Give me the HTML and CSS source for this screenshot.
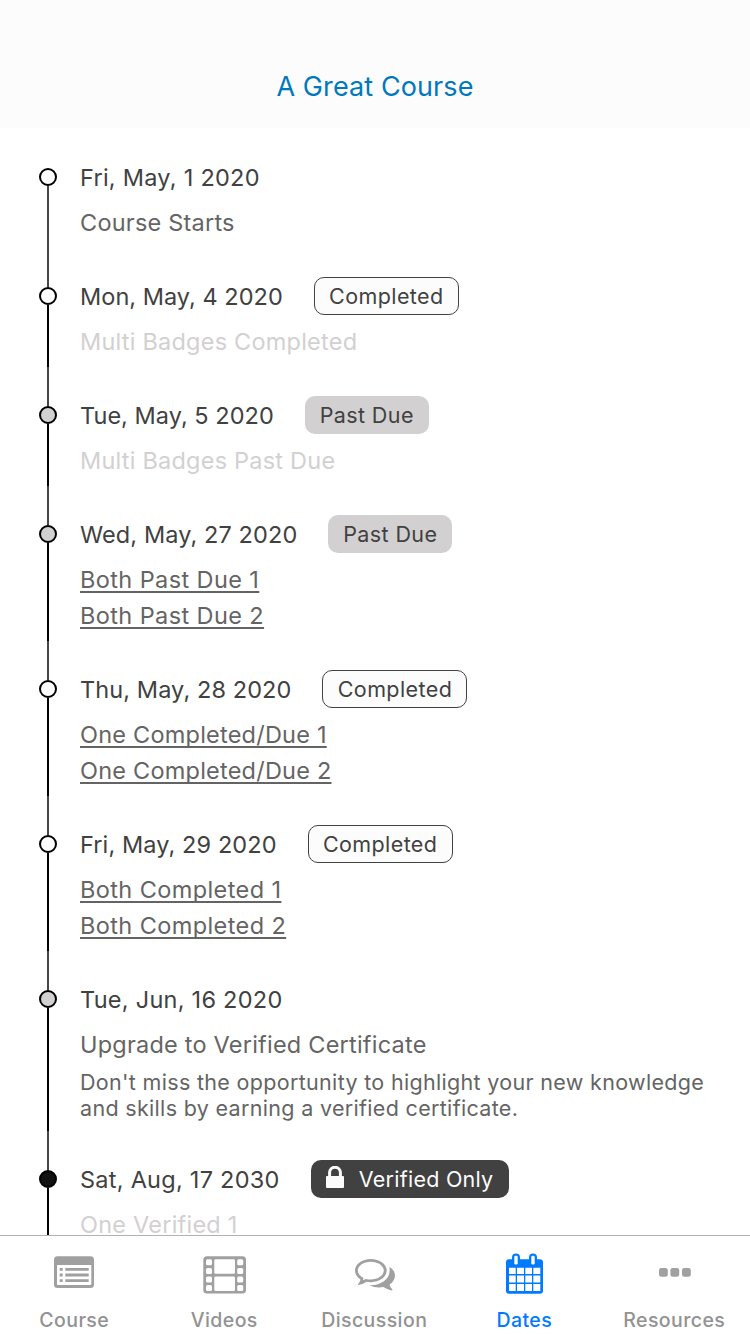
FILE: index.html
```html
<!DOCTYPE html>
<html lang="en">
<head>
<meta charset="utf-8">
<title>A Great Course</title>
<link rel="stylesheet" href="styles.css">
</head>
<body>
<div class="app">
  <header class="nav"><h1 class="nav-title">A Great Course</h1></header>
  <main class="timeline">
    <section class="item first">
      <div class="rail"><i class="up"></i><i class="dot"></i><i class="down"></i></div>
      <div class="content">
        <div class="head"><span class="date loose">Fri, May, 1 2020</span></div>
        <div class="title">Course Starts</div>
      </div>
    </section>
    <section class="item">
      <div class="rail"><i class="up"></i><i class="dot"></i><i class="down"></i></div>
      <div class="content">
        <div class="head"><span class="date tight">Mon, May, 4 2020</span><span class="badge completed">Completed</span></div>
        <div class="title muted">Multi Badges Completed</div>
      </div>
    </section>
    <section class="item">
      <div class="rail"><i class="up"></i><i class="dot past"></i><i class="down"></i></div>
      <div class="content">
        <div class="head"><span class="date tight">Tue, May, 5 2020</span><span class="badge due">Past Due</span></div>
        <div class="title muted">Multi Badges Past Due</div>
      </div>
    </section>
    <section class="item">
      <div class="rail"><i class="up"></i><i class="dot past"></i><i class="down"></i></div>
      <div class="content">
        <div class="head"><span class="date">Wed, May, 27 2020</span><span class="badge due">Past Due</span></div>
        <div class="title"><a class="link wide">Both Past Due 1</a></div>
        <div class="title"><a class="link wide">Both Past Due 2</a></div>
      </div>
    </section>
    <section class="item">
      <div class="rail"><i class="up"></i><i class="dot"></i><i class="down"></i></div>
      <div class="content">
        <div class="head"><span class="date">Thu, May, 28 2020</span><span class="badge completed">Completed</span></div>
        <div class="title"><a class="link">One Completed/Due 1</a></div>
        <div class="title"><a class="link">One Completed/Due 2</a></div>
      </div>
    </section>
    <section class="item">
      <div class="rail"><i class="up"></i><i class="dot"></i><i class="down"></i></div>
      <div class="content">
        <div class="head"><span class="date">Fri, May, 29 2020</span><span class="badge completed">Completed</span></div>
        <div class="title"><a class="link wide">Both Completed 1</a></div>
        <div class="title"><a class="link wide">Both Completed 2</a></div>
      </div>
    </section>
    <section class="item">
      <div class="rail"><i class="up"></i><i class="dot past"></i><i class="down"></i></div>
      <div class="content">
        <div class="head"><span class="date loose">Tue, Jun, 16 2020</span></div>
        <div class="title">Upgrade to Verified Certificate</div>
        <p class="desc">Don't miss the opportunity to highlight your new knowledge<br>and skills by earning a verified certificate.</p>
      </div>
    </section>
    <section class="item">
      <div class="rail"><i class="up"></i><i class="dot next"></i><i class="down"></i></div>
      <div class="content">
        <div class="head"><span class="date loose">Sat, Aug, 17 2030</span><span class="badge verified"><svg class="lock" viewBox="0 0 18 22"><path d="M3.600 10V6.600a5.400 5.400 0 0 1 10.800 0V10" fill="none" stroke="#fcfcfc" stroke-width="3"/><rect y="10" width="18" height="12" rx="1" fill="#fcfcfc"/></svg>Verified Only</span></div>
        <div class="title muted">One Verified 1</div>
      </div>
    </section>
  </main>
  <nav class="tabs">
    <div class="tab">
      <svg class="icon" viewBox="0 0 50 44"><path fill="currentColor" fill-rule="evenodd" d="M7.500 4.300H40.500A3.500 3.500 0 0 1 44 7.800V32.500A3.500 3.500 0 0 1 40.500 36H7.500A3.500 3.500 0 0 1 4 32.500V7.800A3.500 3.500 0 0 1 7.500 4.300ZM7 13V32Q7 33 8 33H40.300Q41.300 33 41.300 32V13Z"/><path stroke="currentColor" stroke-width="2.800" d="M9.700 17.300h3M9.700 23h3M9.700 28.700h3M15.300 17.300h23.400M15.300 23h23.400M15.300 28.700h23.400"/></svg>
      <span class="label">Course</span>
    </div>
    <div class="tab">
      <svg class="icon" viewBox="0 0 50 44"><rect x="3.300" y="4.300" width="42.700" height="37.100" rx="3.500" fill="currentColor"/><g fill="#fff"><rect x="6" y="7.200" width="6" height="6" rx="1.500"/><rect x="6" y="15.900" width="6" height="6" rx="1.500"/><rect x="6" y="24.500" width="6" height="6" rx="1.500"/><rect x="6" y="33" width="6" height="6" rx="1.500"/><rect x="37.200" y="7.200" width="6" height="6" rx="1.500"/><rect x="37.200" y="15.900" width="6" height="6" rx="1.500"/><rect x="37.200" y="24.500" width="6" height="6" rx="1.500"/><rect x="37.200" y="33" width="6" height="6" rx="1.500"/><rect x="14.300" y="7.200" width="20.700" height="14.600" rx="1.300"/><rect x="14.300" y="24.500" width="20.700" height="14.600" rx="1.300"/></g></svg>
      <span class="label">Videos</span>
    </div>
    <div class="tab">
      <svg class="icon" viewBox="0 0 50 44"><path fill="currentColor" fill-rule="evenodd" d="M20.800 7C29.600 7 36.700 12.200 36.700 18.600S29.600 30.200 20.800 30.200C19.300 30.200 17.900 30.100 16.500 29.800C14 31.600 11 32.800 8.300 33Q7.600 32.600 8.200 31.900C9.500 30.500 10.200 29.200 10.400 27.500C7 25.300 5 22.200 5 18.600C5 12.200 12 7 20.800 7ZM20.800 9.700C13.600 9.700 7.800 13.700 7.800 18.600C7.800 21.300 9.500 23.900 13.500 25.900L12.900 28.300L15.700 26.900C17.300 27.300 19 27.500 20.800 27.500C28 27.500 33.800 23.500 33.800 18.600S28 9.700 20.800 9.700Z"/><path fill="currentColor" d="M39.400 15C43 17.200 45 20.100 45 23.600C45 27.200 43 30.400 39.600 32.500C39.800 34.200 40.700 35.500 42.100 37Q42.800 38 41.900 38.500C39.500 38.200 36 36.800 33.600 35Q26 36.500 19.400 33.200C30 33.800 39.600 27.500 39.600 19Q39.800 17 39.400 15Z"/></svg>
      <span class="label">Discussion</span>
    </div>
    <div class="tab active">
      <svg class="icon" viewBox="0 0 50 44"><rect x="6" y="7.300" width="37" height="34.400" rx="3" fill="currentColor"/><rect x="12" y="1.400" width="8" height="13" rx="4" fill="currentColor"/><rect x="29" y="1.400" width="8" height="13" rx="4" fill="currentColor"/><g fill="#fff"><rect x="14.300" y="3.700" width="3.400" height="8.700" rx="1.200"/><rect x="31.300" y="3.700" width="3.400" height="8.700" rx="1.200"/><path d="M9 15.700h6.700v6.300H9zM17 15.700h7v6.300h-7zM25.300 15.700H32v6.300h-6.700zM33.300 15.700h7v6.300h-7zM9 23.600h6.700v7H9zM17 23.600h7v7h-7zM25.300 23.600H32v7h-6.700zM33.300 23.600h7v7h-7zM9 32h6.700v7H9zM17 32h7v7h-7zM25.300 32H32v7h-6.700zM33.300 32h7v7h-7z"/></g></svg>
      <span class="label">Dates</span>
    </div>
    <div class="tab">
      <svg class="icon" viewBox="0 0 50 44"><g fill="currentColor"><rect x="9" y="16" width="8.800" height="8.800" rx="2.300"/><rect x="20.400" y="16" width="8.800" height="8.800" rx="2.300"/><rect x="32" y="16" width="8.800" height="8.800" rx="2.300"/></g></svg>
      <span class="label">Resources</span>
    </div>
  </nav>
</div>
</body>
</html>
```
FILE: styles.css
```css
* { box-sizing: border-box; }
body { margin: 0; background: #fff; font-family: Inter, sans-serif; }
.app { width: 750px; height: 1334px; display: flex; flex-direction: column; overflow: hidden; }
.nav { flex: none; height: 128px; padding-top: 66px; background: #fcfcfc; text-align: center; }
.nav-title { margin: 0; font-size: 27px; line-height: 41px; font-weight: 400; letter-spacing: 0.1px; color: #0079bc; }
.timeline { flex: 1; min-height: 0; overflow: hidden; padding: 1px 0 0 39px; }
.item { display: flex; gap: 23px; }
.rail { flex: none; width: 18px; display: flex; flex-direction: column; align-items: center; }
.up, .down { width: 2px; background: #474747; }
.up { height: 39px; flex: none; }
.down { flex: 1; background: #000; }
.first .up { background: transparent; }
.first .down { background: #474747; }
.dot { flex: none; width: 18px; height: 18px; border: 2px solid #000; border-radius: 50%; background: #fcfcfc; }
.dot.past { background: #d2d0d1; }
.dot.next { background: #111; }
.content { padding: 29px 0 7px; white-space: nowrap; }
.head { display: flex; align-items: center; height: 38px; margin-bottom: 9px; gap: 31px; }
.date { padding-top: 2px; font-size: 23.5px; line-height: 38px; letter-spacing: 0.1px; color: #414141; }
.date.tight { letter-spacing: 0.03px; }
.date.loose { letter-spacing: 0.26px; }
.title { font-size: 23.5px; line-height: 36px; letter-spacing: 0.22px; color: #646464; }
.title.muted { color: #d2d0d1; }
.link { text-decoration: underline; text-decoration-thickness: 2px; text-underline-offset: 3px; text-decoration-skip-ink: none; }
.link.wide { letter-spacing: 0.4px; }
.desc { margin: 6px 0 3px; font-size: 21.5px; line-height: 26px; letter-spacing: 0.32px; color: #646464; }
.badge { display: flex; align-items: center; justify-content: center; height: 38px; border-radius: 10px; font-size: 21.5px; letter-spacing: 0.4px; color: #414141; }
.completed { width: 145px; border: 1px solid #414141; background: #fcfcfc; }
.due { width: 124px; background: #d2d0d1; }
.verified { width: 198px; background: #414141; color: #fcfcfc; gap: 15px; letter-spacing: 0.25px; }
.lock { width: 18px; height: 22px; margin-top: -4px; }
.tabs { flex: none; height: 99px; display: grid; grid-template-columns: repeat(5, 150px); border-top: 1px solid #b2b2b2; background: #fff; }
.tab { display: flex; flex-direction: column; align-items: center; padding-top: 16px; color: #a0a0a0; }
.icon { width: 50px; height: 44px; }
.label { margin: 12px 1.5px 0 0; font-size: 19.5px; line-height: 24px; font-weight: 500; letter-spacing: 0.42px; color: #929292; }
.active, .active .label { color: #007aff; }
```
